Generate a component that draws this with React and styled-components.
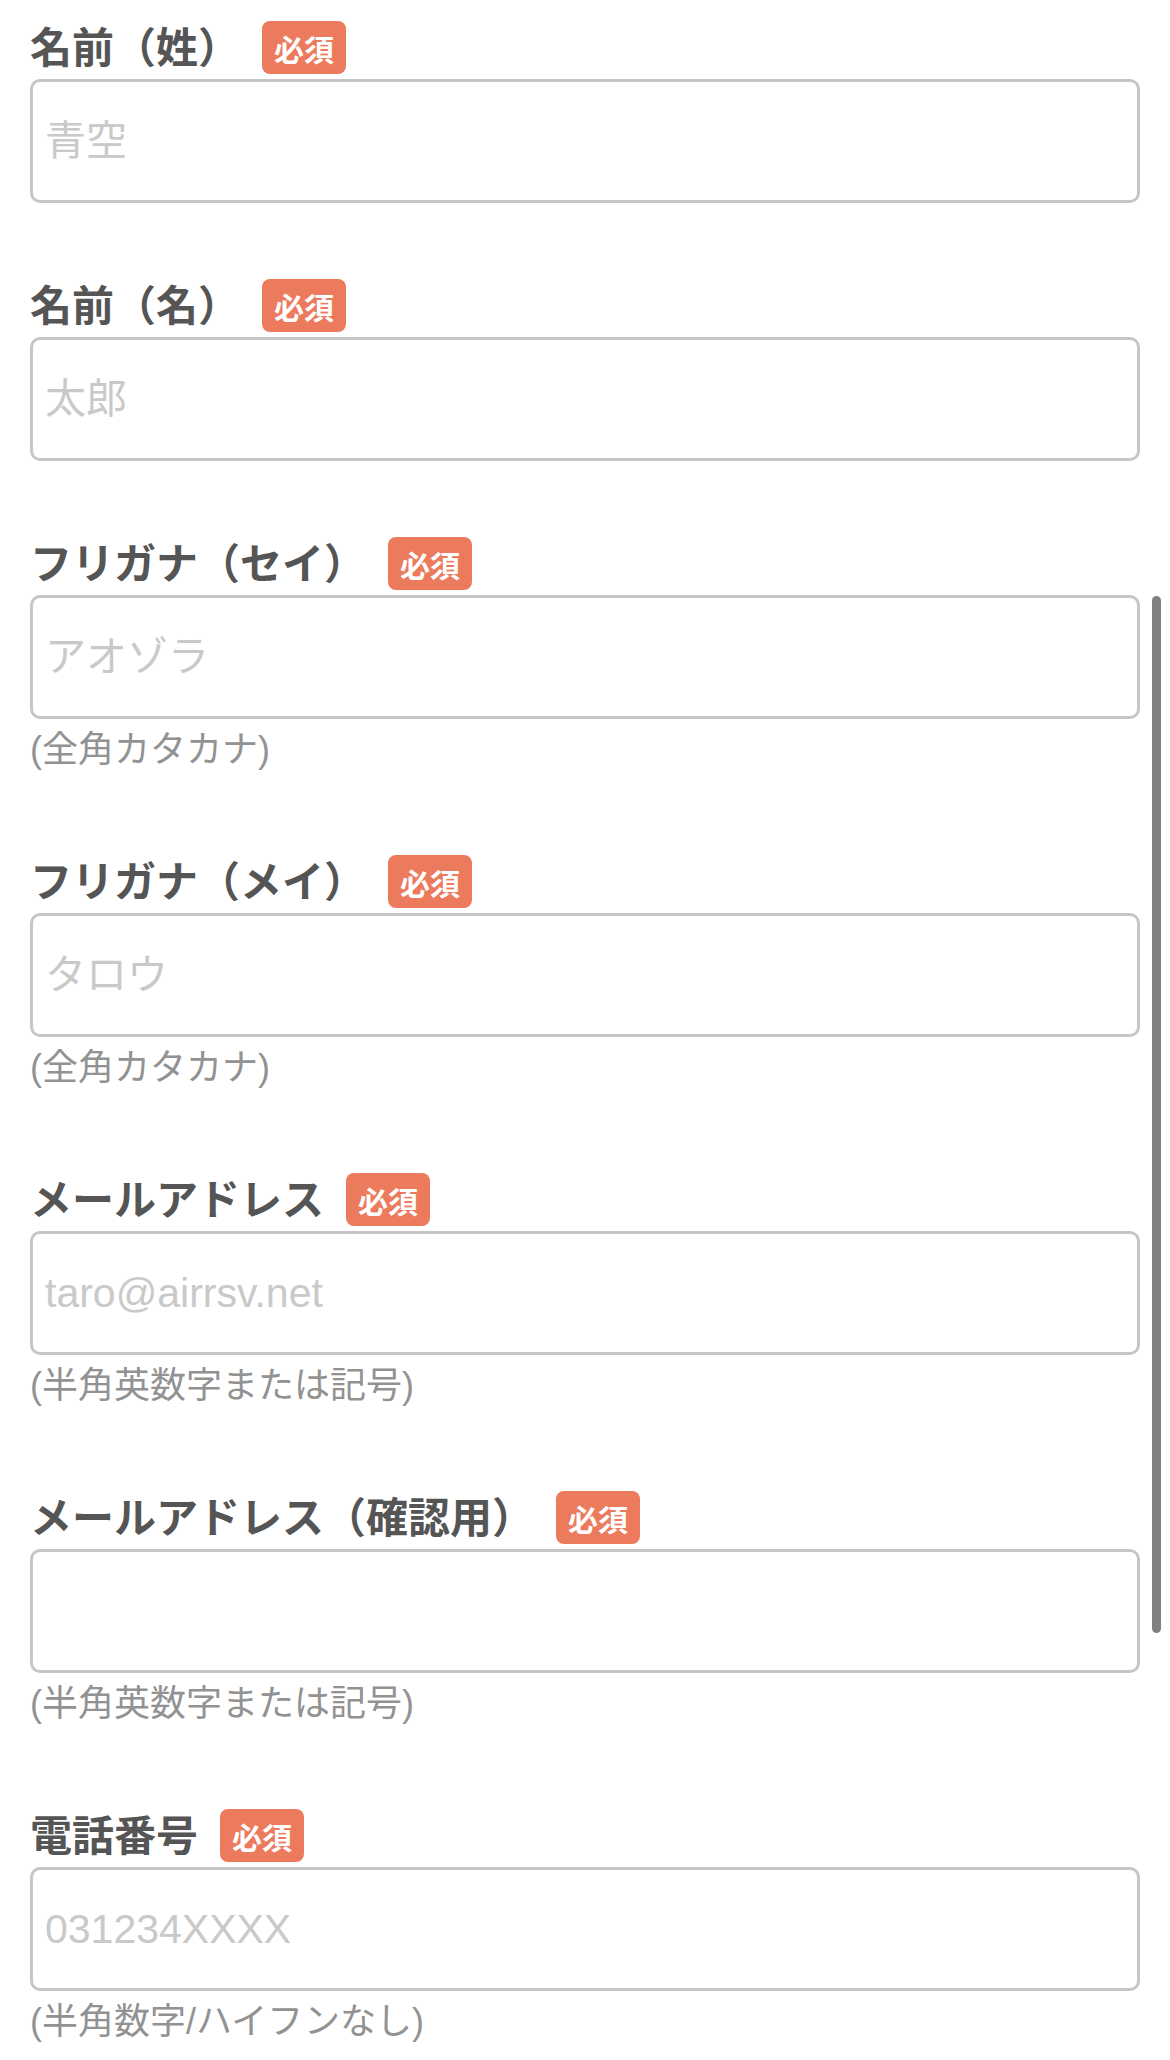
import React from "react";
import styled, { createGlobalStyle } from "styled-components";

const GlobalStyle = createGlobalStyle`
  html, body {
    margin: 0;
    padding: 0;
    background: #ffffff;
  }
  body {
    font-family: "Noto Sans CJK JP", "Liberation Sans", sans-serif;
    overflow: hidden;
  }
  * { box-sizing: border-box; }
`;

const Page = styled.main`
  width: 1170px;
  padding: 21px 30px 0 30px;
  display: flex;
  flex-direction: column;
  gap: 76px;
`;

const Field = styled.section`
  display: flex;
  flex-direction: column;
`;

const LabelRow = styled.div`
  display: flex;
  align-items: center;
  height: 53px;
  margin-bottom: 5px;
`;

const LabelText = styled.label`
  font-family: "Noto Sans CJK JP", sans-serif;
  font-weight: 700;
  font-size: 42px;
  line-height: 53px;
  padding-bottom: 6px;
  color: #555555;
  letter-spacing: 0;
`;

const Badge = styled.span`
  margin-left: 22px;
  height: 53px;
  padding: 0 12px;
  display: inline-flex;
  align-items: center;
  justify-content: center;
  background: #ec7a5d;
  border-radius: 8px;
  color: #ffffff;
  font-family: "Noto Sans CJK JP", sans-serif;
  font-weight: 700;
  font-size: 30px;
  line-height: 1;
`;

const TextInput = styled.input`
  width: 100%;
  height: 124px;
  border: 3px solid #c6c6c6;
  border-radius: 10px;
  padding: 0 12px;
  background: #ffffff;
  font-family: "Liberation Sans", "Noto Sans CJK JP", sans-serif;
  font-size: 41px;
  color: #333333;
  outline: none;
  &::placeholder {
    color: #c9c9c9;
  }
`;

const Hint = styled.p`
  margin: 5px 0 0 0;
  height: 55px;
  font-family: "Liberation Sans", "Noto Sans CJK JP", sans-serif;
  font-size: 36px;
  line-height: 52px;
  color: #929292;
`;

const ScrollThumb = styled.div`
  position: fixed;
  top: 596px;
  right: 9px;
  width: 9px;
  height: 1037px;
  border-radius: 5px;
  background: #808080;
`;

const fields = [
  { label: "名前（姓）", placeholder: "青空" },
  { label: "名前（名）", placeholder: "太郎" },
  { label: "フリガナ（セイ）", placeholder: "アオゾラ", hint: "(全角カタカナ)" },
  { label: "フリガナ（メイ）", placeholder: "タロウ", hint: "(全角カタカナ)" },
  { label: "メールアドレス", placeholder: "taro@airrsv.net", hint: "(半角英数字または記号)" },
  { label: "メールアドレス（確認用）", placeholder: "", hint: "(半角英数字または記号)" },
  { label: "電話番号", placeholder: "031234XXXX", hint: "(半角数字/ハイフンなし)" },
];

export default function App() {
  return (
    <>
      <GlobalStyle />
      <Page>
        {fields.map((f, i) => (
          <Field key={i}>
            <LabelRow>
              <LabelText htmlFor={`f${i}`}>{f.label}</LabelText>
              <Badge>必須</Badge>
            </LabelRow>
            <TextInput id={`f${i}`} type="text" placeholder={f.placeholder} />
            {f.hint && <Hint>{f.hint}</Hint>}
          </Field>
        ))}
      </Page>
      <ScrollThumb />
    </>
  );
}
